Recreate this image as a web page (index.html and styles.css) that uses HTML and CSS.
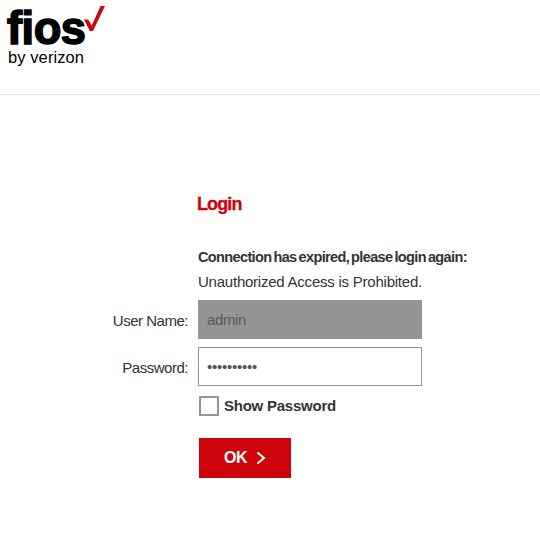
FILE: index.html
```html
<!DOCTYPE html>
<html lang="en">
<head>
<meta charset="utf-8">
<title>Login</title>
<link rel="stylesheet" href="styles.css">
</head>
<body>
<header class="header">
  <svg class="logo" width="110" height="72" viewBox="0 0 110 72" role="img" aria-label="fios by verizon">
    <text class="logo-name" x="7" y="44" textLength="78.500" lengthAdjust="spacingAndGlyphs">fios</text>
    <text class="logo-sub" x="8" y="63" textLength="76">by verizon</text>
    <path class="logo-check" d="M84 19.500h4.200l3.600 6L100.500 6H105L93 31h-3.200z"/>
  </svg>
</header>
<main class="login">
  <h1 class="title">Login</h1>
  <p class="notice">Connection has expired, please login again:</p>
  <p class="warning">Unauthorized Access is Prohibited.</p>
  <form class="form">
    <label class="label label-user" for="user">User Name:</label>
    <input class="field field-user" id="user" type="text" value="admin" disabled>
    <label class="label label-pass" for="pass">Password:</label>
    <div class="field field-pass" id="pass">••••••••••</div>
  </form>
  <label class="show"><span class="box"></span><span class="show-text">Show Password</span></label>
  <button class="ok" type="button"><span class="ok-text">OK</span>
    <svg class="arrow" width="10" height="14" viewBox="0 0 10 14"><path d="M1.500 1.500L8 7 1.500 12.500"/></svg>
  </button>
</main>
</body>
</html>
```
FILE: styles.css
```css
* { box-sizing: border-box; }
body {
  margin: 0;
  background: #fff;
  color: #333;
  font: 15px/20px "Liberation Sans", Arial, sans-serif;
}
.header { height: 95px; border-bottom: 1px solid #e3e3e3; }
.logo { display: block; }
.logo-name { font: bold 47px "Liberation Sans", Arial, sans-serif; letter-spacing: -0.5px; fill: #000; stroke: #000; stroke-width: 1.6; }
.logo-sub { font-size: 16.5px; fill: #000; }
.logo-check { fill: #cd040b; }
.login { padding: 99px 0 0 198px; }
.title, .notice, .warning { margin: 0; white-space: nowrap; }
.title { margin-left: -1px; font-size: 18px; line-height: 20px; color: #cd040b; letter-spacing: -0.9px; -webkit-text-stroke: 0.3px; }
.notice { margin-top: 33px; font-size: 14.500px; font-weight: bold; letter-spacing: -0.63px; word-spacing: -1.400px; }
.warning { margin-top: 5px; letter-spacing: -0.230px; }
.form {
  display: grid;
  grid-template-columns: 98px 224px;
  grid-auto-rows: 39px;
  gap: 8px 0;
  margin: 8px 0 0 -98px;
}
.label { padding: 11px 10px 0 0; text-align: right; letter-spacing: -0.480px; white-space: nowrap; }
.field {
  width: 224px;
  height: 39px;
  padding: 0 8px;
  border: 1px solid #959595;
  font: 15px/37px "Liberation Sans", Arial, sans-serif;
}
.field-user { background: #959595; color: #595959; letter-spacing: -0.4px; }
.field-pass { color: #555; letter-spacing: -0.25px; }
.show { display: flex; align-items: center; gap: 5px; width: max-content; height: 20px; margin: 10px 0 0 1px; }
.box { width: 20px; height: 20px; border: 2px solid #959595; }
.show-text { font-weight: bold; letter-spacing: -0.240px; }
.ok {
  display: flex;
  align-items: center;
  gap: 9px;
  width: 92px;
  height: 40px;
  margin: 22px 0 0 1px;
  padding: 0 0 0 25px;
  border: 0;
  background: #cd040b;
  color: #fff;
  font: bold 16px/20px "Liberation Sans", Arial, sans-serif;
  letter-spacing: -0.5px;
}
.arrow path { fill: none; stroke: #fff; stroke-width: 2; }
```
